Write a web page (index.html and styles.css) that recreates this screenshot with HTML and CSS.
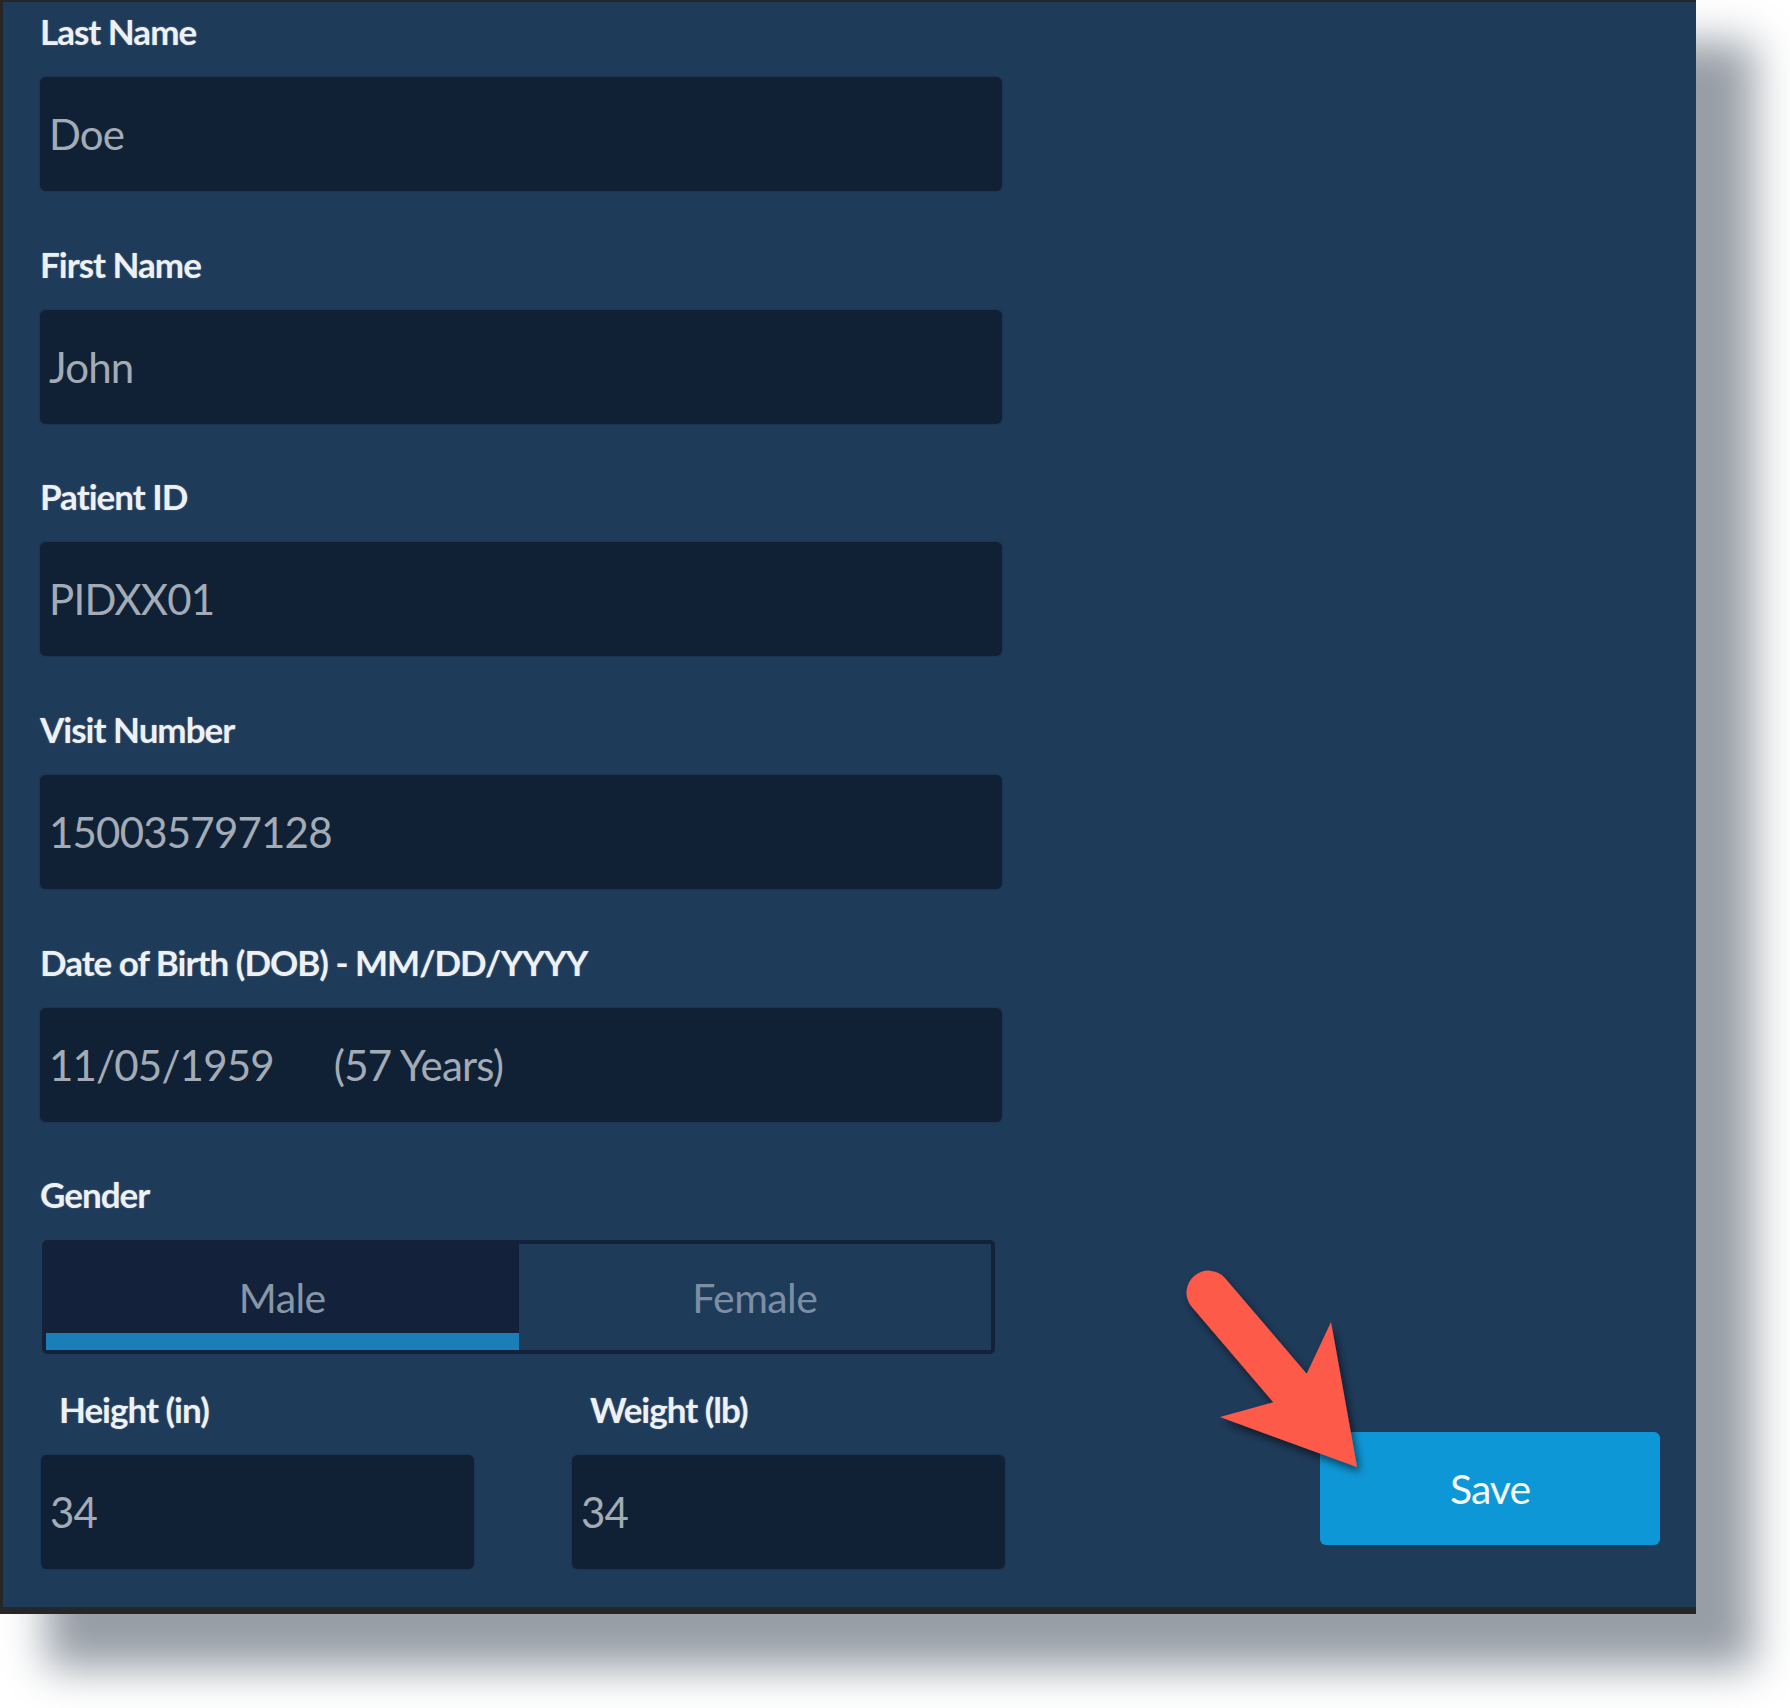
FILE: index.html
```html
<!DOCTYPE html>
<html>
<head>
<meta charset="utf-8">
<link rel="stylesheet" href="styles.css">
</head>
<body>
<div class="panel">
  <div class="form">
    <div class="field">
      <div class="label">Last Name</div>
      <div class="box">Doe</div>
    </div>
    <div class="field">
      <div class="label">First Name</div>
      <div class="box">John</div>
    </div>
    <div class="field">
      <div class="label">Patient ID</div>
      <div class="box">PIDXX01</div>
    </div>
    <div class="field">
      <div class="label">Visit Number</div>
      <div class="box">150035797128</div>
    </div>
    <div class="field">
      <div class="label">Date of Birth (DOB) - MM/DD/YYYY</div>
      <div class="box"><span>11/05/1959</span><span class="age">(57 Years)</span></div>
    </div>
    <div class="field field-gender">
      <div class="label">Gender</div>
      <div class="toggle">
        <div class="opt opt-on">Male</div>
        <div class="opt">Female</div>
      </div>
    </div>
    <div class="pair">
      <div class="field half">
        <div class="label label-in">Height (in)</div>
        <div class="box">34</div>
      </div>
      <div class="field half">
        <div class="label label-in">Weight (lb)</div>
        <div class="box">34</div>
      </div>
    </div>
  </div>
  <div class="actions">
    <div class="save">Save</div>
  </div>
  <svg class="arrow" width="240" height="260" viewBox="0 0 240 260">
    <defs>
      <filter id="ds" x="-20%" y="-20%" width="140%" height="140%">
        <feDropShadow dx="3" dy="5" stdDeviation="4" flood-color="#000" flood-opacity="0.55"/>
      </filter>
    </defs>
    <path filter="url(#ds)" fill="#fd5a48" d="M64.7 37.7 L146.7 133.7 L171 82 L197 227 L60 177 L113.3 162.3 L31.3 66.3 A22 22 0 0 1 64.7 37.7 Z"/>
  </svg>
</div>
</body>
</html>
```

FILE: styles.css
```css
html, body {
  margin: 0;
  padding: 0;
  background: #ffffff;
}

body {
  width: 1790px;
  height: 1708px;
  overflow: hidden;
  font-family: Lato, "Open Sans", sans-serif;
}

.panel {
  position: relative;
  box-sizing: border-box;
  width: 1696px;
  height: 1614px;
  background: #1f3b5a;
  border-top: 2px solid #262626;
  border-left: 3px solid #262626;
  border-bottom: 7px solid #262626;
  padding: 8px 36px 0 37px;
  display: flex;
  box-shadow: 52px 48px 40px 6px #979ea6;
}

.form {
  width: 962px;
  display: flex;
  flex-direction: column;
}

.field {
  margin-bottom: 51.7px;
}

.field-gender {
  margin-bottom: 34px;
}

.label {
  font-size: 35px;
  line-height: 42px;
  font-weight: 700;
  color: #eef1f4;
  letter-spacing: -1px;
  margin-bottom: 25px;
  white-space: nowrap;
  text-shadow: 0 0 2px rgba(255, 255, 255, 0.25);
}

.label-in {
  padding-left: 18px;
}

.box {
  height: 114px;
  line-height: 114px;
  background: #112135;
  border-radius: 6px;
  padding-left: 9px;
  font-size: 42px;
  color: #a3acb6;
  letter-spacing: -0.8px;
  white-space: nowrap;
  box-shadow: 0 0 2px rgba(0, 0, 0, 0.35);
}

.age {
  margin-left: 60px;
}

.toggle {
  margin-left: 2px;
  margin-top: 3px;
  width: 953px;
  height: 114px;
  box-sizing: border-box;
  border: 4px solid #13223a;
  border-radius: 5px;
  display: flex;
}

.opt {
  flex: 1;
  display: flex;
  align-items: center;
  justify-content: center;
  font-size: 41px;
  color: #7c8ea3;
  letter-spacing: -0.6px;
}

.opt-on {
  background: #13223a;
  color: #8897a8;
  border-bottom: 17px solid #1a7fb8;
  padding-top: 17px;
}

.pair {
  display: flex;
  gap: 98px;
  margin-left: 1px;
  width: 964px;
}

.half {
  flex: 1;
  margin-bottom: 0;
}

.actions {
  flex: 1;
  display: flex;
  align-items: flex-end;
  justify-content: flex-end;
  padding-bottom: 62px;
}

.save {
  width: 340px;
  height: 113px;
  line-height: 113px;
  border-radius: 6px;
  background: #0e97d6;
  color: #f4f8fb;
  text-align: center;
  font-size: 41px;
  letter-spacing: -1px;
}

.arrow {
  position: absolute;
  left: 1157px;
  top: 1238px;
}
```
